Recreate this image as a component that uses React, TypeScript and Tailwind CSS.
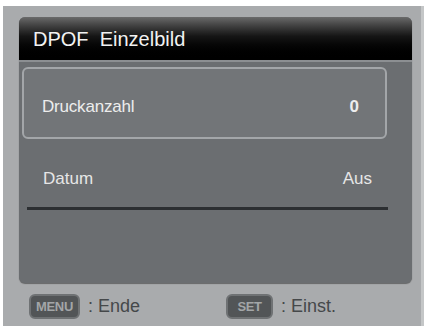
import React from 'react';

const font = { fontFamily: '"Liberation Sans", Arial, sans-serif' };

function KeyCap({ label, width }: { label: string; width: string }) {
  return (
    <div
      className={`${width} h-[25px] rounded-[6px] bg-[#525557] border-2 border-[#6f7274] flex items-center justify-center text-[13px] font-bold text-[#a3a6a8] tracking-tight`}
    >
      {label}
    </div>
  );
}

export default function App() {
  return (
    <div className="w-[428px] h-[326px] bg-white pt-[6px] pl-[3px] overflow-hidden" style={font}>
      <div className="w-[421px] h-[320px] bg-[#a9abad] border-r-[3px] border-[#c4c6c7] pl-[16px] pt-[11px]">
        {/* screen panel */}
        <div className="w-[393px] h-[266px] bg-[#6b6e71] rounded-[6px] overflow-hidden shadow-[0_1px_1px_rgba(0,0,0,0.4)]">
          <div className="h-[43px] bg-gradient-to-b from-[#6a6a6a] via-[#151515] via-45% to-black flex items-center pl-[14px] pt-[1px]">
            <span className="text-[20px] text-[#f2f2f2] tracking-[0px]">DPOF&nbsp; Einzelbild</span>
          </div>
          <div className="h-[2px] bg-[#8c8f92]" />

          <div className="pl-[3px] pt-[5px]">
            <div className="w-[365px] h-[72px] rounded-[6px] border-2 border-[#a3a6a9] bg-[#727578] flex items-center justify-between pl-[18px] pr-[26px] pt-[7px]">
              <span className="text-[17px] text-[#ededed] tracking-[-0.2px]">Druckanzahl</span>
              <span className="text-[17px] text-[#ededed] font-bold">0</span>
            </div>
          </div>

          <div className="h-[68px] flex items-center justify-between pl-[24px] pr-[40px] pt-[12px]">
            <span className="text-[17px] text-[#e6e6e6]">Datum</span>
            <span className="text-[17px] text-[#e6e6e6]">Aus</span>
          </div>
          <div className="ml-[8px] w-[361px] h-[3px] bg-[#2c2f32]" />
        </div>

        {/* footer hints */}
        <div className="flex items-center pt-[10px] pl-[10px] text-[18px] text-[#45484a]">
          <KeyCap label="MENU" width="w-[51px]" />
          <span className="ml-[8px]">: Ende</span>
          <div className="ml-[86px]">
            <KeyCap label="SET" width="w-[47px]" />
          </div>
          <span className="ml-[8px]">: Einst.</span>
        </div>
      </div>
    </div>
  );
}
